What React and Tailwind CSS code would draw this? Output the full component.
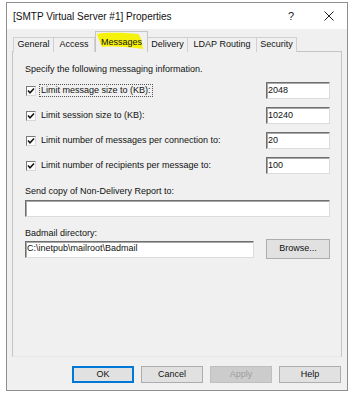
import React from 'react';

const tabs = [
    { label: 'General', w: 'w-[41px]' },
    { label: 'Access', w: 'w-[41px]' },
    { label: 'Messages', w: 'w-[53px]', active: true },
    { label: 'Delivery', w: 'w-[40px]' },
    { label: 'LDAP Routing', w: 'w-[69px]' },
    { label: 'Security', w: 'w-[40px]' },
];

const limits = [
    { label: 'Limit message size to (KB):', value: '2048', focus: true },
    { label: 'Limit session size to (KB):', value: '10240' },
    { label: 'Limit number of messages per connection to:', value: '20' },
    { label: 'Limit number of recipients per message to:', value: '100' },
];

function CheckBox() {
    return (
        <span className="flex h-[10px] w-[10px] shrink-0 items-center justify-center border border-[#7a7a7a] border-r-[#d8d8d8] border-b-[#d8d8d8] bg-white">
            <svg width="8" height="8" viewBox="0 0 8 8">
                <path d="M1 3.6 L3 5.8 L7 1.4" fill="none" stroke="#111" strokeWidth="1.5" />
            </svg>
        </span>
    );
}

function TextBox({ value, className }) {
    return (
        <div className={`flex h-[17px] items-center border border-[#6e6e6e] border-r-[#dcdcdc] border-b-[#dcdcdc] bg-white pl-[1px] text-[9px] text-[#111] shadow-[inset_1px_1px_0_#a8a8a8] ${className}`}>
            {value}
        </div>
    );
}

function Button({ children, variant }) {
    const styles = {
        default: 'border-[#0078d7] bg-[#e1e1e1] text-[#111] shadow-[inset_0_0_0_1px_#0078d7]',
        normal: 'border-[#adadad] bg-[#e1e1e1] text-[#111]',
        disabled: 'border-[#bfbfbf] bg-[#cccccc] text-[#9c9c9c]',
    };
    return (
        <div className={`flex h-[17px] w-[62px] items-center justify-center border text-[9px] ${styles[variant]}`}>
            {children}
        </div>
    );
}

export default function App() {
    return (
        <div className="h-[396px] w-[352px] bg-white pl-[6px] pt-[2px]" style={{ fontFamily: '"Liberation Sans", Arial, sans-serif' }}>
            <div className="flex h-[389px] w-[342px] flex-col border border-[#8e8e8e] bg-[#f0f0f0]">
                {/* title bar */}
                <div className="flex h-[26px] items-center bg-white pl-[6px]">
                    <span className="text-[10px] text-[#111]">[SMTP Virtual Server #1] Properties</span>
                    <span className="ml-auto w-[40px] text-center text-[11px] text-[#222]">?</span>
                    <span className="flex w-[36px] items-center justify-center">
                        <svg width="10" height="10" viewBox="0 0 10 10">
                            <path d="M0.5 0.5 L9.5 9.5 M9.5 0.5 L0.5 9.5" stroke="#222" strokeWidth="1" />
                        </svg>
                    </span>
                </div>

                <div className="flex flex-1 flex-col px-[5px] pt-[2px] pb-[7px]">
                    {/* tabs */}
                    <div className="relative z-10 -mb-px flex h-[21px] items-end pl-[1px]">
                        {tabs.map((t) =>
                            t.active ? (
                                <div key={t.label} className={`relative flex h-[21px] ${t.w} items-start justify-center border border-b-0 border-[#c4c4c4] bg-[#f0f0f0] pt-[4px] text-[9px] text-[#111]`}>
                                    <svg className="absolute left-0 top-0" width="53" height="19" viewBox="0 0 53 19">
                                        <path d="M1 2 C10 0 30 1 42 2 C45 4 46 10 47 17 C35 15 18 14 6 15 C4 10 2 6 1 2 Z" fill="#f7f20c" />
                                    </svg>
                                    <span className="relative">{t.label}</span>
                                </div>
                            ) : (
                                <div key={t.label} className={`flex h-[15px] ${t.w} items-center justify-center border border-l-0 border-b-0 border-[#d0d0d0] first:border-l bg-[#f0f0f0] text-[9px] text-[#111]`}>
                                    {t.label}
                                </div>
                            )
                        )}
                    </div>

                    {/* panel */}
                    <div className="flex h-[306px] flex-col border border-[#c4c4c4] border-b-[#e6e6e6] bg-[#f0f0f0] pl-[12px] pr-[11px] pt-[12px]">
                        <div className="h-[11px] text-[9px] leading-[11px] text-[#111]">Specify the following messaging information.</div>

                        <div className="mt-[7px] flex flex-col gap-[8px]">
                            {limits.map((l) => (
                                <div key={l.label} className="flex h-[17px] items-center">
                                    <span className="ml-[1px]"><CheckBox /></span>
                                    <span className={`ml-[3px] px-[1px] text-[9px] leading-[11px] text-[#111] ${l.focus ? 'border border-dotted border-[#555]' : 'border border-transparent'}`}>
                                        {l.label}
                                    </span>
                                    <TextBox value={l.value} className="ml-auto w-[64px]" />
                                </div>
                            ))}
                        </div>

                        <div className="mt-[12px] h-[11px] text-[9px] leading-[11px] text-[#111]">Send copy of Non-Delivery Report to:</div>
                        <TextBox value="" className="mt-[3px] w-full" />

                        <div className="mt-[11px] h-[11px] text-[9px] leading-[11px] text-[#111]">Badmail directory:</div>
                        <div className="flex h-[20px] items-center">
                            <TextBox value="C:\inetpub\mailroot\Badmail" className="w-[229px]" />
                            <div className="ml-auto flex h-[20px] w-[64px] items-center justify-center border border-[#adadad] bg-[#e1e1e1] text-[9px] text-[#111]">
                                Browse...
                            </div>
                        </div>
                    </div>

                    {/* dialog buttons */}
                    <div className="mr-[1px] mt-[9px] flex justify-end gap-[7px]">
                        <Button variant="default">OK</Button>
                        <Button variant="normal">Cancel</Button>
                        <Button variant="disabled">Apply</Button>
                        <Button variant="normal">Help</Button>
                    </div>
                </div>
            </div>
        </div>
    );
}
